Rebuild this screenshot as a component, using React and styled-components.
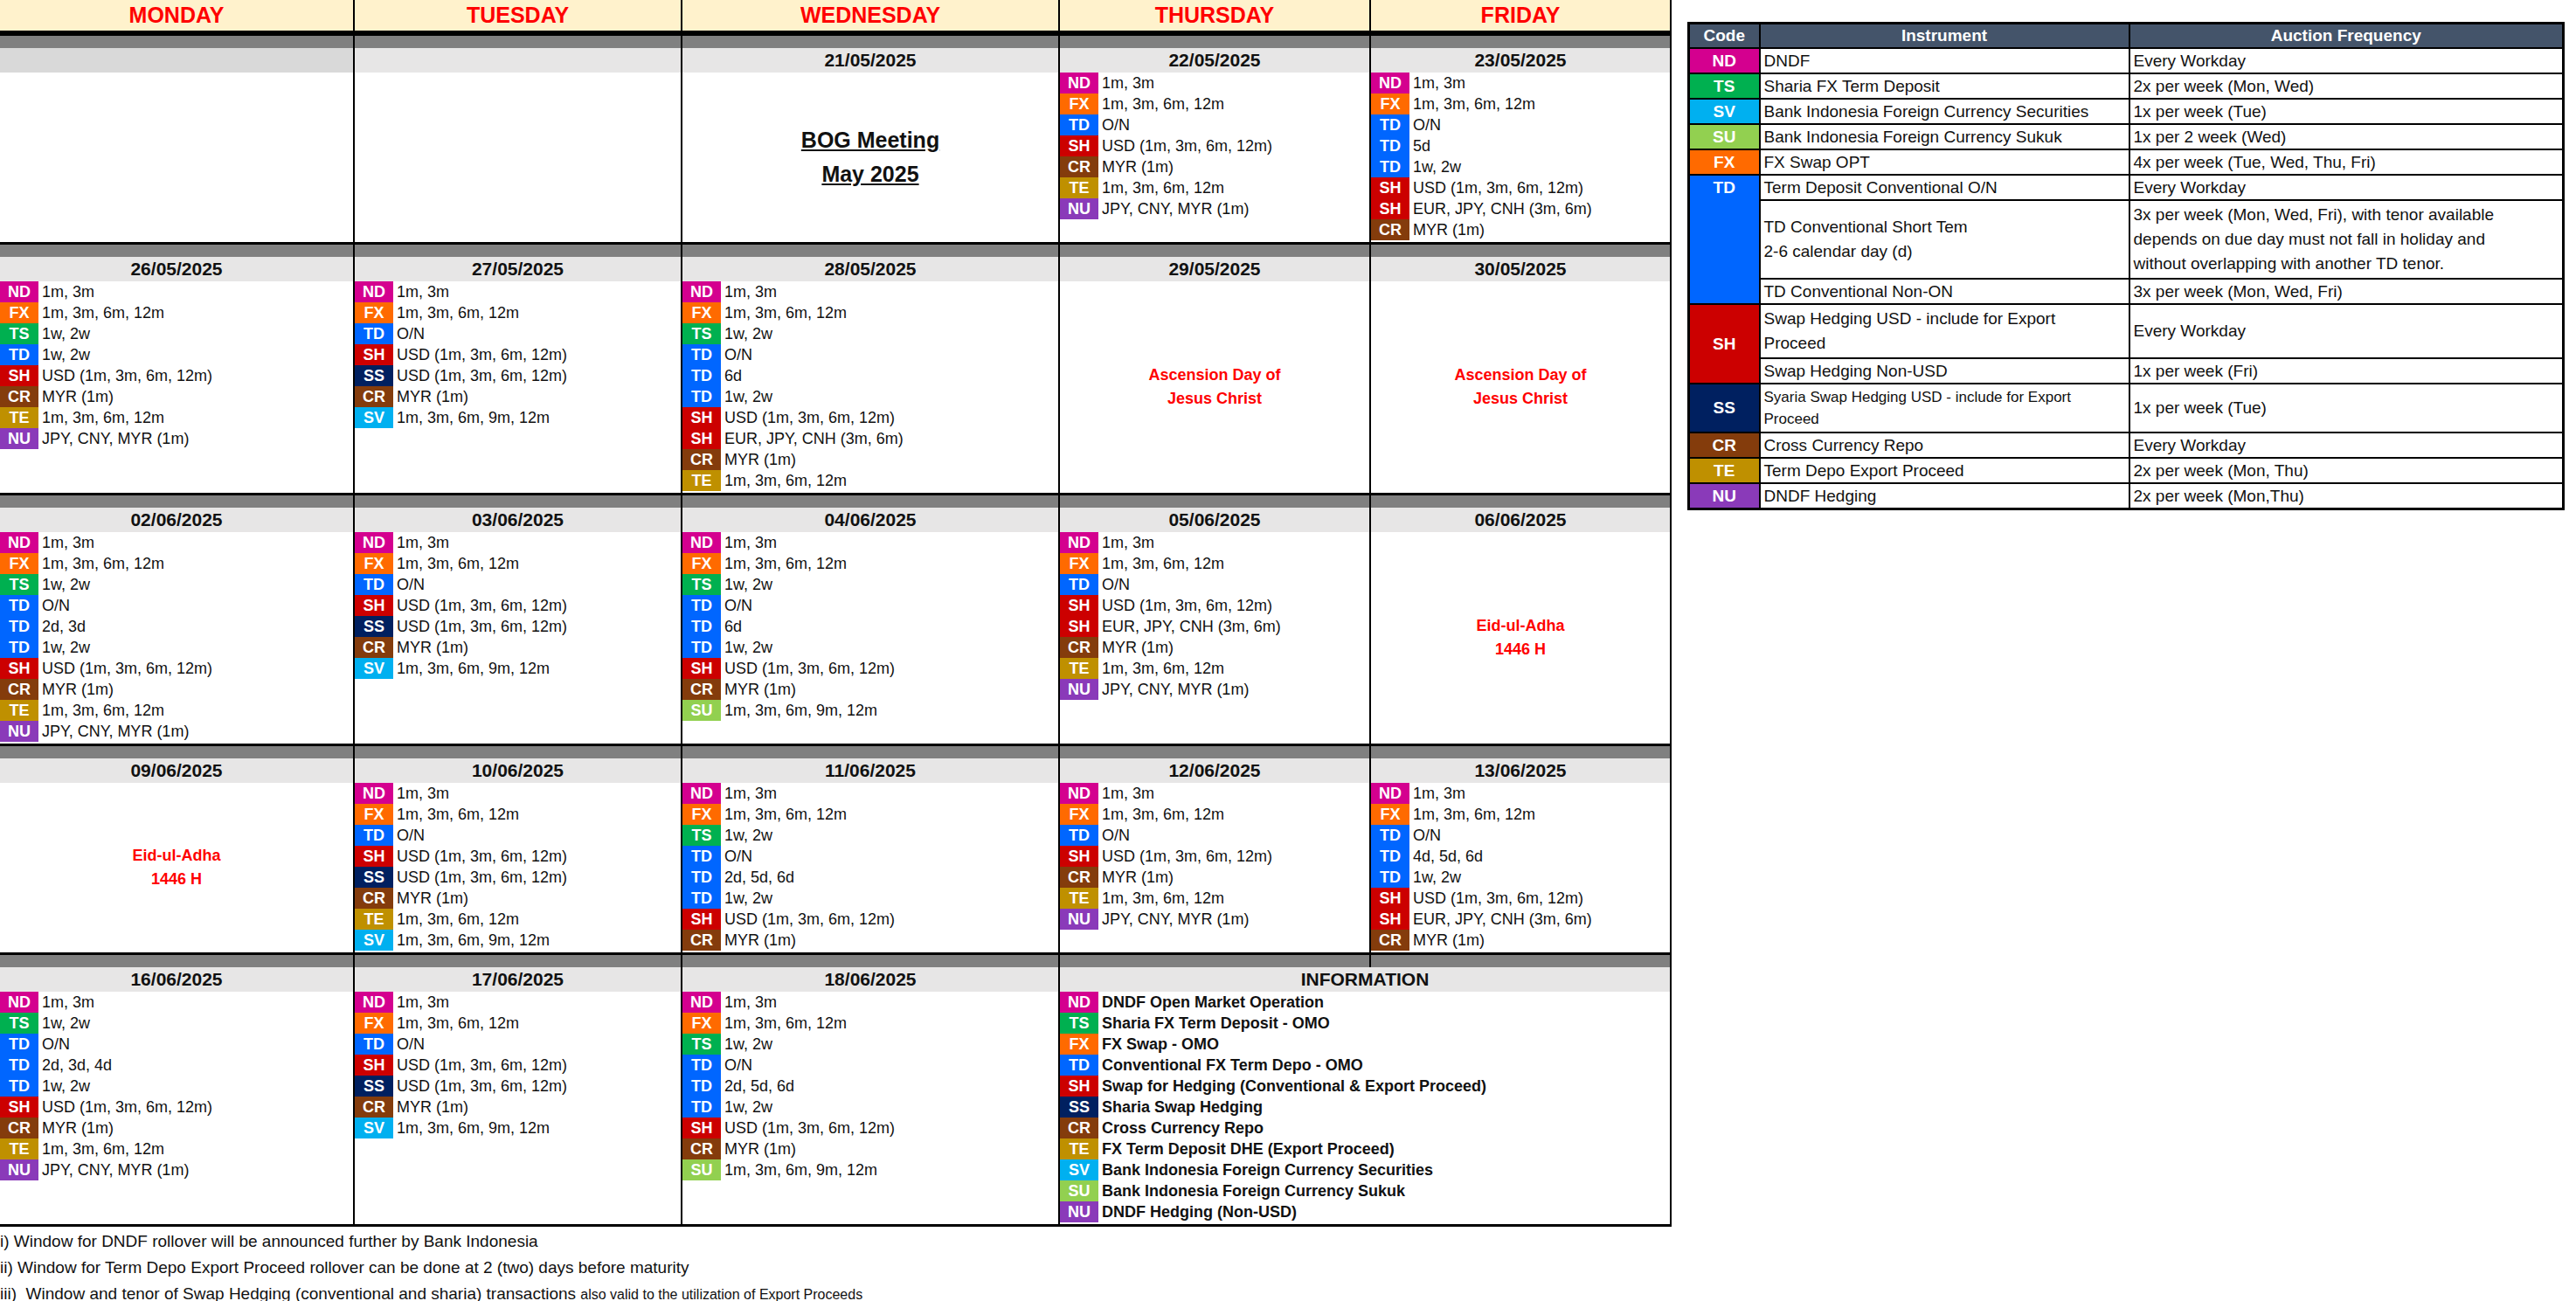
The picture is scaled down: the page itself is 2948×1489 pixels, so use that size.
import React from 'react'
import styled, {createGlobalStyle} from 'styled-components'

const COLORS = {
    ND: '#d4008f', FX: '#ff6a00', TS: '#00b050', TD: '#0066ff', SH: '#cc0000',
    SS: '#002060', CR: '#843c0c', TE: '#bf9000', NU: '#8a3ab9', SV: '#00b0f0', SU: '#92d050',
}

const DAYS = ['MONDAY', 'TUESDAY', 'WEDNESDAY', 'THURSDAY', 'FRIDAY']

const WEEKS = [
    [
        {date: '', dark: true, items: []},
        {date: '', items: []},
        {date: '21/05/2025', bog: true},
        {date: '22/05/2025', items: [['ND', '1m, 3m'], ['FX', '1m, 3m, 6m, 12m'], ['TD', 'O/N'], ['SH', 'USD (1m, 3m, 6m, 12m)'], ['CR', 'MYR (1m)'], ['TE', '1m, 3m, 6m, 12m'], ['NU', 'JPY, CNY, MYR (1m)']]},
        {date: '23/05/2025', items: [['ND', '1m, 3m'], ['FX', '1m, 3m, 6m, 12m'], ['TD', 'O/N'], ['TD', '5d'], ['TD', '1w, 2w'], ['SH', 'USD (1m, 3m, 6m, 12m)'], ['SH', 'EUR, JPY, CNH (3m, 6m)'], ['CR', 'MYR (1m)']]},
    ],
    [
        {date: '26/05/2025', items: [['ND', '1m, 3m'], ['FX', '1m, 3m, 6m, 12m'], ['TS', '1w, 2w'], ['TD', '1w, 2w'], ['SH', 'USD (1m, 3m, 6m, 12m)'], ['CR', 'MYR (1m)'], ['TE', '1m, 3m, 6m, 12m'], ['NU', 'JPY, CNY, MYR (1m)']]},
        {date: '27/05/2025', items: [['ND', '1m, 3m'], ['FX', '1m, 3m, 6m, 12m'], ['TD', 'O/N'], ['SH', 'USD (1m, 3m, 6m, 12m)'], ['SS', 'USD (1m, 3m, 6m, 12m)'], ['CR', 'MYR (1m)'], ['SV', '1m, 3m, 6m, 9m, 12m']]},
        {date: '28/05/2025', items: [['ND', '1m, 3m'], ['FX', '1m, 3m, 6m, 12m'], ['TS', '1w, 2w'], ['TD', 'O/N'], ['TD', '6d'], ['TD', '1w, 2w'], ['SH', 'USD (1m, 3m, 6m, 12m)'], ['SH', 'EUR, JPY, CNH (3m, 6m)'], ['CR', 'MYR (1m)'], ['TE', '1m, 3m, 6m, 12m']]},
        {date: '29/05/2025', holiday: ['Ascension Day of', 'Jesus Christ']},
        {date: '30/05/2025', holiday: ['Ascension Day of', 'Jesus Christ']},
    ],
    [
        {date: '02/06/2025', items: [['ND', '1m, 3m'], ['FX', '1m, 3m, 6m, 12m'], ['TS', '1w, 2w'], ['TD', 'O/N'], ['TD', '2d, 3d'], ['TD', '1w, 2w'], ['SH', 'USD (1m, 3m, 6m, 12m)'], ['CR', 'MYR (1m)'], ['TE', '1m, 3m, 6m, 12m'], ['NU', 'JPY, CNY, MYR (1m)']]},
        {date: '03/06/2025', items: [['ND', '1m, 3m'], ['FX', '1m, 3m, 6m, 12m'], ['TD', 'O/N'], ['SH', 'USD (1m, 3m, 6m, 12m)'], ['SS', 'USD (1m, 3m, 6m, 12m)'], ['CR', 'MYR (1m)'], ['SV', '1m, 3m, 6m, 9m, 12m']]},
        {date: '04/06/2025', items: [['ND', '1m, 3m'], ['FX', '1m, 3m, 6m, 12m'], ['TS', '1w, 2w'], ['TD', 'O/N'], ['TD', '6d'], ['TD', '1w, 2w'], ['SH', 'USD (1m, 3m, 6m, 12m)'], ['CR', 'MYR (1m)'], ['SU', '1m, 3m, 6m, 9m, 12m']]},
        {date: '05/06/2025', items: [['ND', '1m, 3m'], ['FX', '1m, 3m, 6m, 12m'], ['TD', 'O/N'], ['SH', 'USD (1m, 3m, 6m, 12m)'], ['SH', 'EUR, JPY, CNH (3m, 6m)'], ['CR', 'MYR (1m)'], ['TE', '1m, 3m, 6m, 12m'], ['NU', 'JPY, CNY, MYR (1m)']]},
        {date: '06/06/2025', holiday: ['Eid-ul-Adha', '1446 H']},
    ],
    [
        {date: '09/06/2025', holiday: ['Eid-ul-Adha', '1446 H']},
        {date: '10/06/2025', items: [['ND', '1m, 3m'], ['FX', '1m, 3m, 6m, 12m'], ['TD', 'O/N'], ['SH', 'USD (1m, 3m, 6m, 12m)'], ['SS', 'USD (1m, 3m, 6m, 12m)'], ['CR', 'MYR (1m)'], ['TE', '1m, 3m, 6m, 12m'], ['SV', '1m, 3m, 6m, 9m, 12m']]},
        {date: '11/06/2025', items: [['ND', '1m, 3m'], ['FX', '1m, 3m, 6m, 12m'], ['TS', '1w, 2w'], ['TD', 'O/N'], ['TD', '2d, 5d, 6d'], ['TD', '1w, 2w'], ['SH', 'USD (1m, 3m, 6m, 12m)'], ['CR', 'MYR (1m)']]},
        {date: '12/06/2025', items: [['ND', '1m, 3m'], ['FX', '1m, 3m, 6m, 12m'], ['TD', 'O/N'], ['SH', 'USD (1m, 3m, 6m, 12m)'], ['CR', 'MYR (1m)'], ['TE', '1m, 3m, 6m, 12m'], ['NU', 'JPY, CNY, MYR (1m)']]},
        {date: '13/06/2025', items: [['ND', '1m, 3m'], ['FX', '1m, 3m, 6m, 12m'], ['TD', 'O/N'], ['TD', '4d, 5d, 6d'], ['TD', '1w, 2w'], ['SH', 'USD (1m, 3m, 6m, 12m)'], ['SH', 'EUR, JPY, CNH (3m, 6m)'], ['CR', 'MYR (1m)']]},
    ],
    [
        {date: '16/06/2025', items: [['ND', '1m, 3m'], ['TS', '1w, 2w'], ['TD', 'O/N'], ['TD', '2d, 3d, 4d'], ['TD', '1w, 2w'], ['SH', 'USD (1m, 3m, 6m, 12m)'], ['CR', 'MYR (1m)'], ['TE', '1m, 3m, 6m, 12m'], ['NU', 'JPY, CNY, MYR (1m)']]},
        {date: '17/06/2025', items: [['ND', '1m, 3m'], ['FX', '1m, 3m, 6m, 12m'], ['TD', 'O/N'], ['SH', 'USD (1m, 3m, 6m, 12m)'], ['SS', 'USD (1m, 3m, 6m, 12m)'], ['CR', 'MYR (1m)'], ['SV', '1m, 3m, 6m, 9m, 12m']]},
        {date: '18/06/2025', items: [['ND', '1m, 3m'], ['FX', '1m, 3m, 6m, 12m'], ['TS', '1w, 2w'], ['TD', 'O/N'], ['TD', '2d, 5d, 6d'], ['TD', '1w, 2w'], ['SH', 'USD (1m, 3m, 6m, 12m)'], ['CR', 'MYR (1m)'], ['SU', '1m, 3m, 6m, 9m, 12m']]},
    ],
]

const INFO = [
    ['ND', 'DNDF Open Market Operation'], ['TS', 'Sharia FX Term Deposit - OMO'], ['FX', 'FX Swap - OMO'],
    ['TD', 'Conventional FX Term Depo - OMO'], ['SH', 'Swap for Hedging (Conventional & Export Proceed)'],
    ['SS', 'Sharia Swap Hedging'], ['CR', 'Cross Currency Repo'], ['TE', 'FX Term Deposit DHE (Export Proceed)'],
    ['SV', 'Bank Indonesia Foreign Currency Securities'], ['SU', 'Bank Indonesia Foreign Currency Sukuk'], ['NU', 'DNDF Hedging (Non-USD)'],
]

function Items({items})
{
    return items.map(([code, text], i) => (
        <ItemRow key={i}>
            <Badge code={code}>{code}</Badge>
            <span>{text}</span>
        </ItemRow>
    ))
}

function DayCell({cell})
{
    return (
        <Cell>
            <GrayBar />
            <DateHead dark={cell.dark}>{cell.date}</DateHead>
            {cell.bog && <Centered><Bog>BOG Meeting</Bog><Bog>May 2025</Bog></Centered>}
            {cell.holiday && <Centered><Holiday>{cell.holiday[0]}<br />{cell.holiday[1]}</Holiday></Centered>}
            {cell.items && <Body><Items items={cell.items} /></Body>}
        </Cell>
    )
}

export default function App()
{
    return (
        <>
            <Global />
            <Page>
                <div>
                    <Calendar>
                        {DAYS.map(d => <DayName key={d}>{d}</DayName>)}
                        {WEEKS.map((week, w) => week.map((cell, i) => (
                            <DayCell key={w + '-' + i} cell={cell} />
                        )))}
                        <InfoCell>
                            <SplitBar><div /><div /></SplitBar>
                            <DateHead>INFORMATION</DateHead>
                            <Body bold><Items items={INFO} /></Body>
                        </InfoCell>
                    </Calendar>
                    <Notes>
                        <div>i) Window for DNDF rollover will be announced further by Bank Indonesia</div>
                        <div>ii) Window for Term Depo Export Proceed rollover can be done at 2 (two) days before maturity</div>
                        <div>iii)&nbsp; Window and tenor of Swap Hedging (conventional and sharia) transactions <Small>also valid to the utilization of Export Proceeds</Small></div>
                    </Notes>
                </div>
                <Legend>
                    <thead>
                        <tr><th>Code</th><th>Instrument</th><th>Auction Frequency</th></tr>
                    </thead>
                    <tbody>
                        <tr><CodeCell code="ND">ND</CodeCell><td>DNDF</td><td>Every Workday</td></tr>
                        <tr><CodeCell code="TS">TS</CodeCell><td>Sharia FX Term Deposit</td><td>2x per week (Mon, Wed)</td></tr>
                        <tr><CodeCell code="SV">SV</CodeCell><td>Bank Indonesia Foreign Currency Securities</td><td>1x per week (Tue)</td></tr>
                        <tr><CodeCell code="SU">SU</CodeCell><td>Bank Indonesia Foreign Currency Sukuk</td><td>1x per 2 week (Wed)</td></tr>
                        <tr><CodeCell code="FX">FX</CodeCell><td>FX Swap OPT</td><td>4x per week (Tue, Wed, Thu, Fri)</td></tr>
                        <tr><CodeCell code="TD" rowSpan={3} top>TD</CodeCell><td>Term Deposit Conventional O/N</td><td>Every Workday</td></tr>
                        <tr><Tall>TD Conventional Short Tem<br />2-6 calendar day (d)</Tall><Tall>3x per week (Mon, Wed, Fri), with tenor available<br />depends on due day must not fall in holiday and<br />without overlapping with another TD tenor.</Tall></tr>
                        <tr><td>TD Conventional Non-ON</td><td>3x per week (Mon, Wed, Fri)</td></tr>
                        <tr><CodeCell code="SH" rowSpan={2}>SH</CodeCell><Tall>Swap Hedging USD - include for Export<br />Proceed</Tall><td>Every Workday</td></tr>
                        <tr><td>Swap Hedging Non-USD</td><td>1x per week (Fri)</td></tr>
                        <tr><CodeCell code="SS">SS</CodeCell><Tall small>Syaria Swap Hedging USD - include for Export<br />Proceed</Tall><td>1x per week (Tue)</td></tr>
                        <tr><CodeCell code="CR">CR</CodeCell><td>Cross Currency Repo</td><td>Every Workday</td></tr>
                        <tr><CodeCell code="TE">TE</CodeCell><td>Term Depo Export Proceed</td><td>2x per week (Mon, Thu)</td></tr>
                        <tr><CodeCell code="NU">NU</CodeCell><td>DNDF Hedging</td><td>2x per week (Mon,Thu)</td></tr>
                    </tbody>
                </Legend>
            </Page>
        </>
    )
}

const Global = createGlobalStyle`
    *, *::before, *::after { box-sizing: border-box; }
    body {
        margin: 0;
        background: #fff;
        font-family: "Liberation Sans", Arial, sans-serif;
        color: #111;
    }
`
const Page = styled.div`
    display: flex;
    align-items: flex-start;
    gap: 18px;
    width: 2948px;
`
const Calendar = styled.div`
    display: grid;
    grid-template-columns: 406px 375px 432px 356px 344px;
    border-bottom: 3px solid #000;
`
const DayName = styled.div`
    height: 38px;
    background: #fff2cc;
    color: #ff0000;
    font-weight: bold;
    font-size: 25px;
    display: flex;
    align-items: center;
    justify-content: center;
    border-right: 2px solid #000;
    border-bottom: 3px solid #000;
`
const Cell = styled.div`
    display: flex;
    flex-direction: column;
    border-right: 2px solid #000;
`
const GrayBar = styled.div`
    height: 17px;
    background: #808080;
    border-top: 3px solid #000;
`
const SplitBar = styled.div`
    display: grid;
    grid-template-columns: 356px 1fr;
    height: 17px;
    background: #808080;
    border-top: 3px solid #000;
    & > div:first-child { border-right: 2px solid #000; }
`
const DateHead = styled.div`
    height: 28px;
    background: ${p => p.dark ? '#d9d9d9' : '#e7e6e6'};
    font-weight: bold;
    font-size: 21px;
    display: flex;
    align-items: center;
    justify-content: center;
`
const Body = styled.div`
    flex: 1;
    padding-bottom: 2px;
    font-weight: ${p => p.bold ? 'bold' : 'normal'};
`
const ItemRow = styled.div`
    display: flex;
    align-items: center;
    height: 24px;
    font-size: 18px;
    white-space: nowrap;
    gap: 4px;
`
const Badge = styled.span`
    width: 44px;
    align-self: stretch;
    background: ${p => COLORS[p.code]};
    color: #fff;
    font-weight: bold;
    font-size: 18px;
    display: flex;
    align-items: center;
    justify-content: center;
`
const Centered = styled.div`
    flex: 1;
    display: flex;
    flex-direction: column;
    align-items: center;
    justify-content: center;
    gap: 10px;
`
const Bog = styled.div`
    font-weight: bold;
    font-size: 25px;
    text-decoration: underline;
`
const Holiday = styled.div`
    color: #ff0000;
    font-weight: bold;
    font-size: 18px;
    text-align: center;
    line-height: 27px;
`
const InfoCell = styled(Cell)`
    grid-column: span 2;
`
const Notes = styled.div`
    font-size: 19px;
    line-height: 30px;
    padding-top: 2px;
`
const Small = styled.span`
    font-size: 16px;
`
const Legend = styled.table`
    margin-top: 25px;
    border-collapse: collapse;
    border: 3px solid #000;
    font-size: 19px;
    th {
        background: #44546a;
        color: #fff;
        font-weight: bold;
        height: 28px;
        border: 2px solid #000;
    }
    th:nth-child(1) { width: 81px; }
    th:nth-child(2) { width: 423px; }
    th:nth-child(3) { width: 497px; }
    td {
        border: 2px solid #000;
        height: 29px;
        padding: 0 4px;
        line-height: 27px;
        white-space: nowrap;
    }
`
const CodeCell = styled.td`
    && {
        background: ${p => COLORS[p.code]};
        color: #fff;
        font-weight: bold;
        text-align: center;
        vertical-align: ${p => p.top ? 'top' : 'middle'};
    }
`
const Tall = styled.td`
    && {
        line-height: ${p => p.small ? '25px' : '28px'};
        font-size: ${p => p.small ? '17px' : '19px'};
        padding: 2px 4px;
    }
`
